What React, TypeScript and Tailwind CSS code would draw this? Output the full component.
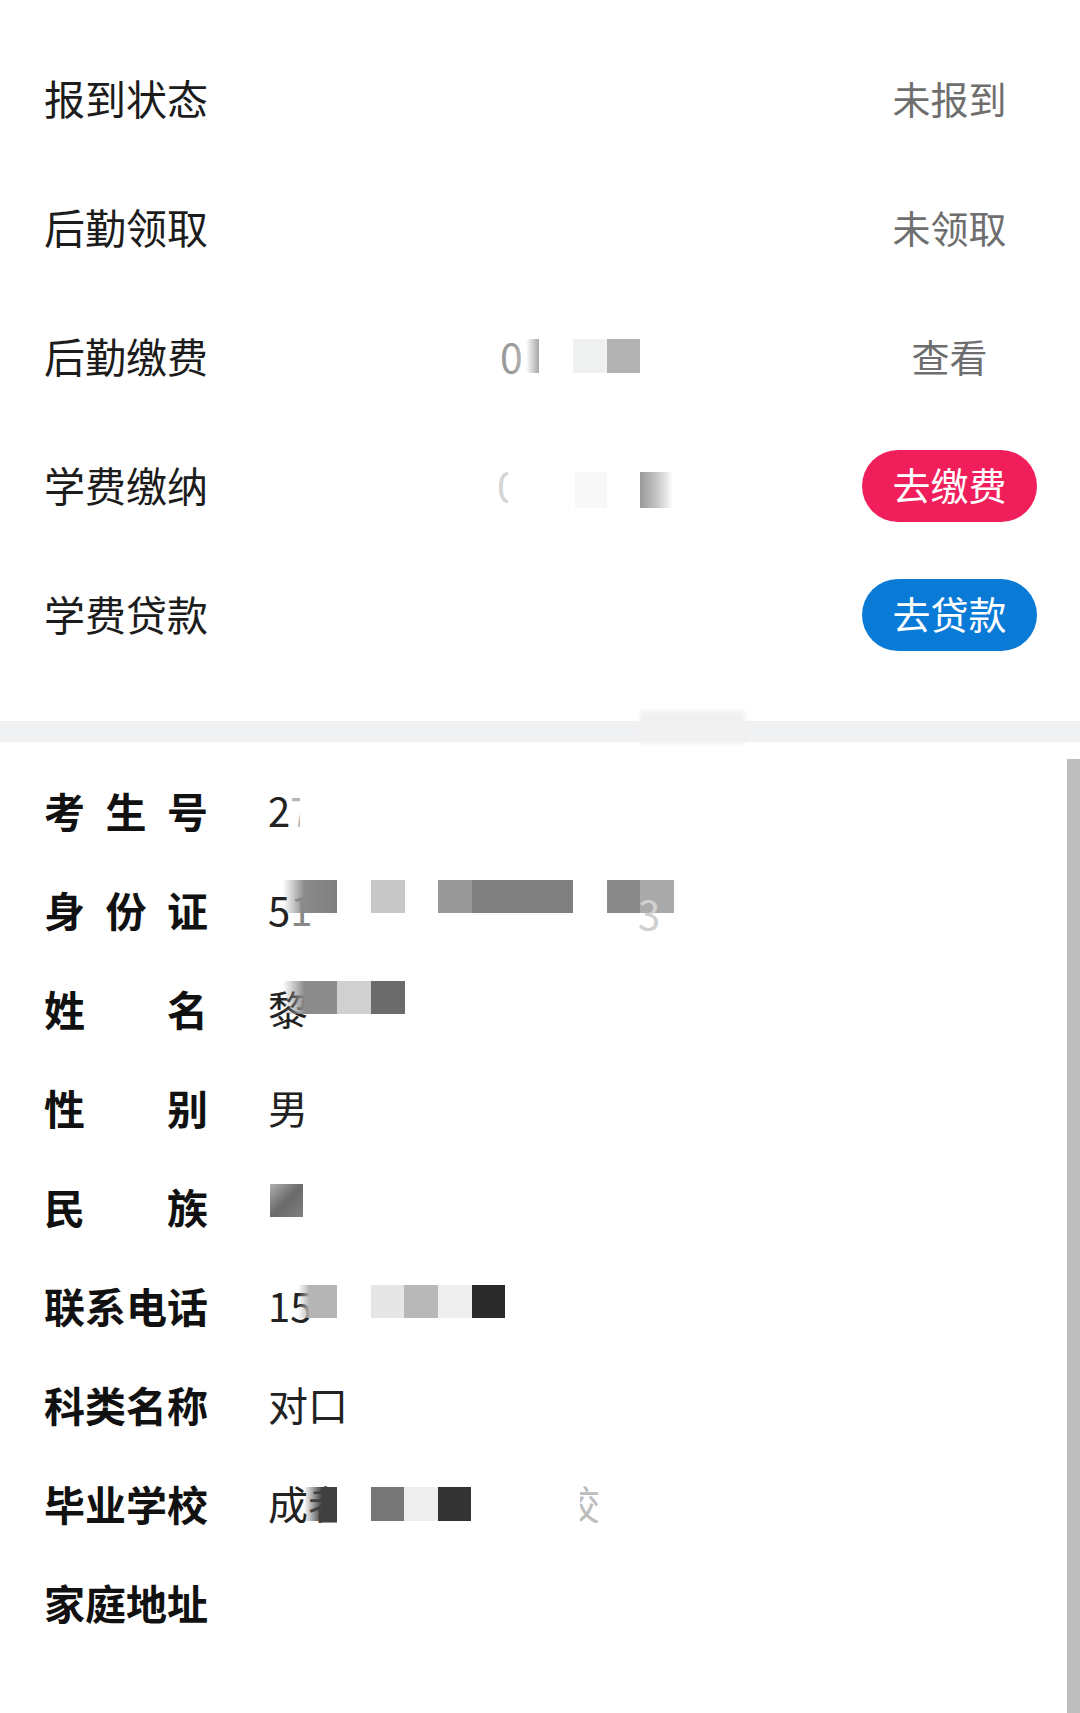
import React from "react";

type Block = { l: number; t: number; w: number; h: number; c: string };

const FONT = { fontFamily: '"Noto Sans CJK SC", "Noto Sans", sans-serif' };

function Blocks({ items }: { items: Block[] }) {
  return (
    <>
      {items.map((b, i) => (
        <div
          key={i}
          className={`absolute ${b.c}`}
          style={{ left: b.l, top: b.t, width: b.w, height: b.h }}
        />
      ))}
    </>
  );
}

function TopRow({
  label,
  middle,
  right,
}: {
  label: string;
  middle?: React.ReactNode;
  right: React.ReactNode;
}) {
  return (
    <div className="flex h-[129px] items-center pl-[44px] pr-[43px]">
      <div className="w-[453px] pb-[6px] text-[41px] leading-none text-[#1c1c1c]">{label}</div>
      <div className="relative flex h-full flex-1 items-center pb-[6px]">{middle}</div>
      <div className="flex w-[175px] justify-center pb-[4px]">{right}</div>
    </div>
  );
}

function Label({ chars }: { chars: string[] }) {
  return (
    <div className="flex w-[164px] justify-between pb-[5px] text-[41px] font-bold leading-none text-[#111]">
      {chars.map((c, i) => (
        <span key={i}>{c}</span>
      ))}
    </div>
  );
}

function InfoRow({ chars, children }: { chars: string[]; children?: React.ReactNode }) {
  return (
    <div className="flex h-[99px] items-center pl-[44px]">
      <Label chars={chars} />
      <div className="relative ml-[60px] flex h-full flex-1 items-center pb-[6px] text-[40px] leading-none text-[#222]">
        {children}
      </div>
    </div>
  );
}

export default function App() {
  return (
    <div className="relative h-[1713px] w-[1080px] overflow-hidden bg-white" style={FONT}>
      {/* top section */}
      <div className="pt-[36px] pb-[40px]">
        <TopRow label="报到状态" right={<span className="pb-[2px] text-[38px] leading-none text-[#6e6e6e]">未报到</span>} />
        <TopRow label="后勤领取" right={<span className="pb-[2px] text-[38px] leading-none text-[#6e6e6e]">未领取</span>} />
        <TopRow
          label="后勤缴费"
          middle={
            <>
              <span className="ml-[3px] text-[41px] leading-none text-[#9a9a9a]">0</span>
              <Blocks
                items={[
                  { l: 16, t: 45, w: 26, h: 34, c: "bg-gradient-to-r from-white/0 via-white/40 to-[#a6a6a6]" },
                  { l: 76, t: 45, w: 34, h: 34, c: "bg-[#eff0f0]" },
                  { l: 110, t: 45, w: 33, h: 34, c: "bg-[#b3b3b3]" },
                ]}
              />
            </>
          }
          right={<span className="pb-[2px] text-[38px] leading-none text-[#6e6e6e]">查看</span>}
        />
        <TopRow
          label="学费缴纳"
          middle={
            <>
              <span className="inline-block w-[11px] overflow-hidden text-[41px] leading-none text-[#d4d4d4]">0</span>
              <Blocks
                items={[
                  { l: 78, t: 49, w: 32, h: 36, c: "bg-[#f8f8f8]" },
                  { l: 143, t: 49, w: 33, h: 36, c: "bg-gradient-to-r from-[#9a9a9a] via-[#c4c4c4] to-white" },
                ]}
              />
            </>
          }
          right={
            <div className="flex h-[72px] w-[175px] items-center justify-center rounded-full bg-[#f01f5b] pb-[4px] text-[38px] leading-none text-white">
              去缴费
            </div>
          }
        />
        <TopRow
          label="学费贷款"
          right={
            <div className="flex h-[72px] w-[175px] items-center justify-center rounded-full bg-[#0a7ad7] pb-[4px] text-[38px] leading-none text-white">
              去贷款
            </div>
          }
        />
      </div>

      {/* separator */}
      <div className="relative h-[21px] bg-[#f0f1f3]">
        <div className="absolute left-[640px] top-[-10px] h-[33px] w-[105px] bg-[#f0f0f0] blur-[2px]" />
      </div>

      {/* info section */}
      <div className="pt-[21px]">
        <InfoRow chars={["考", "生", "号"]}>
          <span>2</span>
          <span className="inline-block w-[10px] overflow-hidden text-[#b5b5b5]">7</span>
        </InfoRow>
        <InfoRow chars={["身", "份", "证"]}>
          <span>5</span>
          <span className="text-[#888]">1</span>
          <Blocks
            items={[
              { l: 15, t: 18, w: 54, h: 33, c: "bg-gradient-to-r from-white/0 via-[#8a8a8a] via-40% to-[#808080]" },
              { l: 103, t: 18, w: 34, h: 33, c: "bg-[#c8c8c8]" },
              { l: 170, t: 18, w: 34, h: 33, c: "bg-[#999999]" },
              { l: 204, t: 18, w: 101, h: 33, c: "bg-[#808080]" },
              { l: 339, t: 18, w: 33, h: 33, c: "bg-[#8a8a8a]" },
              { l: 372, t: 18, w: 34, h: 33, c: "bg-[#aaaaaa]" },
            ]}
          />
          <span className="absolute left-[370px] top-[31px] text-[40px] leading-none text-[#d0d0d0]">3</span>
        </InfoRow>
        <InfoRow chars={["姓", "名"]}>
          <span>黎</span>
          <Blocks
            items={[
              { l: 15, t: 20, w: 54, h: 33, c: "bg-gradient-to-r from-white/0 via-[#8c8c8c] via-40% to-[#8c8c8c]" },
              { l: 69, t: 20, w: 34, h: 33, c: "bg-[#d0d0d0]" },
              { l: 103, t: 20, w: 34, h: 33, c: "bg-[#6b6b6b]" },
            ]}
          />
        </InfoRow>
        <InfoRow chars={["性", "别"]}>
          <span>男</span>
        </InfoRow>
        <InfoRow chars={["民", "族"]}>
          <Blocks
            items={[{ l: 2, t: 25, w: 33, h: 33, c: "bg-gradient-to-br from-[#b0b0b0] via-[#6a6a6a] to-[#808080]" }]}
          />
        </InfoRow>
        <InfoRow chars={["联", "系", "电", "话"]}>
          <span>15</span>
          <Blocks
            items={[
              { l: 30, t: 27, w: 39, h: 33, c: "bg-gradient-to-r from-white/0 via-[#b5b5b5] via-30% to-[#b5b5b5]" },
              { l: 103, t: 27, w: 33, h: 33, c: "bg-[#e6e6e6]" },
              { l: 136, t: 27, w: 34, h: 33, c: "bg-[#b8b8b8]" },
              { l: 170, t: 27, w: 34, h: 33, c: "bg-[#efefef]" },
              { l: 204, t: 27, w: 33, h: 33, c: "bg-[#2a2a2a]" },
            ]}
          />
        </InfoRow>
        <InfoRow chars={["科", "类", "名", "称"]}>
          <span>对口</span>
        </InfoRow>
        <InfoRow chars={["毕", "业", "学", "校"]}>
          <span>成</span>
          <span className="inline-block w-[29px] overflow-hidden text-[#444]">者</span>
          <Blocks
            items={[
              { l: 36, t: 31, w: 33, h: 34, c: "bg-gradient-to-r from-white/0 via-[#404040] via-55% to-[#404040]" },
              { l: 103, t: 31, w: 33, h: 34, c: "bg-[#777777]" },
              { l: 136, t: 31, w: 34, h: 34, c: "bg-[#eeeeee]" },
              { l: 170, t: 31, w: 33, h: 34, c: "bg-[#333333]" },
            ]}
          />
          <span className="absolute left-[312px] top-[27px] inline-block w-[20px] overflow-hidden text-[40px] leading-none text-[#bdbdbd]">
            <span className="-ml-[20px] inline-block">校</span>
          </span>
        </InfoRow>
        <InfoRow chars={["家", "庭", "地", "址"]} />
      </div>

      {/* scrollbar */}
      <div className="absolute bottom-0 right-0 top-[759px] w-[13px] bg-[#bdbdbd]" />
    </div>
  );
}
